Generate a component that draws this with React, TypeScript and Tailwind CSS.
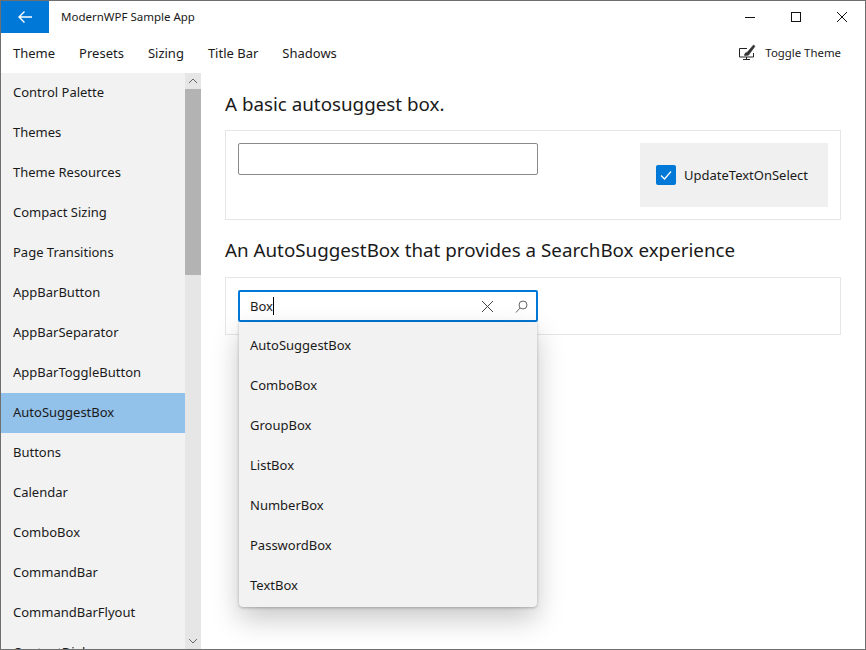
const nav = ["Control Palette","Themes","Theme Resources","Compact Sizing","Page Transitions","AppBarButton","AppBarSeparator","AppBarToggleButton","AutoSuggestBox","Buttons","Calendar","ComboBox","CommandBar","CommandBarFlyout","ContentDialog"];
const menu = ["Theme","Presets","Sizing","Title Bar","Shadows"];
const suggestions = ["AutoSuggestBox","ComboBox","GroupBox","ListBox","NumberBox","PasswordBox","TextBox"];

export default function App() {
  return (
    <div className="w-[866px] h-[650px] border border-[#6f6f6f] bg-white text-[#1a1a1a] flex flex-col overflow-hidden font-['Noto_Sans','Open_Sans',sans-serif] text-[13px]">
      <div className="h-8 flex shrink-0 items-center">
        <div className="w-12 h-8 bg-[#0078d7] flex items-center justify-center">
          <svg width="14" height="12" viewBox="0 0 14 12" fill="none" stroke="white" strokeWidth="1.4"><path d="M1 6H14M6.500 .5L1 6l5.500 5.500" /></svg>
        </div>
        <div className="ml-3 text-[11.5px] leading-none">ModernWPF Sample App</div>
        <div className="ml-auto flex h-8">
          <div className="w-[46px] flex items-center justify-center">
            <svg width="12" height="12" viewBox="0 0 12 12" stroke="#111" strokeWidth="1"><path d="M1 6.500h10" /></svg>
          </div>
          <div className="w-[46px] flex items-center justify-center">
            <svg width="12" height="12" viewBox="0 0 12 12" fill="none" stroke="#111" strokeWidth="1"><rect x="1.500" y="1.500" width="9" height="9" /></svg>
          </div>
          <div className="w-[46px] flex items-center justify-center">
            <svg width="12" height="12" viewBox="0 0 12 12" fill="none" stroke="#111" strokeWidth="1"><path d="M1 1l10 10M11 1L1 11" /></svg>
          </div>
        </div>
      </div>
      <div className="h-10 flex shrink-0 items-center pl-3 pr-6">
        <div className="flex gap-6 pt-[2px]">
          {menu.map((m) => <div key={m}>{m}</div>)}
        </div>
        <div className="ml-auto flex items-center gap-[9px] text-[11.4px]">
          <svg width="18" height="17" viewBox="0 0 18 17" fill="none" stroke="#222" strokeWidth="1"><path d="M9 4.500H1.500v8.500h14V9M8.500 13v2.500M5 15.500h7" /><path d="M6.500 11.500c0-2 1-3 2.500-3L15.500 1l1.500 1.300-5.500 7.500c-.3 1.500-2 1.700-5 1.700z" fill="#333" stroke="#333" strokeWidth=".6" /></svg>
          <span>Toggle Theme</span>
        </div>
      </div>
      <div className="flex-1 flex min-h-0">
        <div className="w-[200px] shrink-0 flex overflow-hidden bg-[#f2f2f2]">
          <div className="w-[184px] shrink-0">
            {nav.map((n) => (
              <div key={n} className={`h-10 pl-3 flex items-center ${n === "AutoSuggestBox" ? "bg-[#92c1e9]" : ""}`}>
                {n}
              </div>
            ))}
          </div>
          <div className="w-4 bg-[#e6e6e6] flex flex-col">
            <div className="h-4 flex items-center justify-center">
              <svg width="10" height="6" viewBox="0 0 10 6" fill="none" stroke="#666" strokeWidth="1"><path d="M1 5l4-4 4 4" /></svg>
            </div>
            <div className="h-[186px] bg-[#b3b3b3]" />
            <div className="flex-1 flex items-end justify-center pb-[5px]">
              <svg width="10" height="6" viewBox="0 0 10 6" fill="none" stroke="#666" strokeWidth="1"><path d="M1 1l4 4 4-4" /></svg>
            </div>
          </div>
        </div>
        <div className="flex-1 pl-6 pr-6 relative">
          <h2 className="text-[18.8px] leading-7 mt-[17px]">A basic autosuggest box.</h2>
          <div className="mt-[12px] h-[90px] border border-[#e6e6e6] p-3 flex justify-between">
            <div className="w-[300px] h-8 border border-[#8a8a8a] rounded-[2px]" />
            <div className="w-[188px] h-16 bg-[#f0f0f0] flex items-center pl-4 gap-2">
              <div className="w-5 h-5 rounded-[2px] bg-[#0078d7] flex items-center justify-center">
                <svg width="12" height="12" viewBox="0 0 12 12" fill="none" stroke="white" strokeWidth="1.2"><path d="M1 6.500l3.500 3.500L11 2.500" /></svg>
              </div>
              <span className="-mb-[2px]">UpdateTextOnSelect</span>
            </div>
          </div>
          <h2 className="text-[18.8px] leading-7 mt-4">An AutoSuggestBox that provides a SearchBox experience</h2>
          <div className="mt-[13px] h-[58px] border border-[#e6e6e6] pt-3 pl-3">
            <div className="w-[300px] h-8 border-2 border-[#0078d7] rounded-[2px] flex items-center pl-[10px] pr-[8px]">
              <span className="pt-[2px]">Box</span>
              <span className="w-px h-[18px] bg-black" />
              <svg className="ml-auto mr-[1px]" width="13" height="13" viewBox="0 0 13 13" fill="none" stroke="#444" strokeWidth="1"><path d="M1 1l11 11M12 1L1 12" /></svg>
              <svg className="ml-[20px]" width="13" height="13" viewBox="0 0 13 13" fill="none" stroke="#666" strokeWidth="1"><circle cx="8" cy="5" r="4" /><path d="M5 8l-4 4.500" /></svg>
            </div>
          </div>
          <div className="absolute left-[38px] top-[249px] w-[298px] h-[285px] bg-[#f2f2f2] rounded-b-[4px] pt-[4px] shadow-[0_1px_3px_rgba(0,0,0,0.25),0_12px_28px_rgba(0,0,0,0.22)] z-10">
            {suggestions.map((s) => (
              <div key={s} className="h-10 pl-[11px] flex items-center">{s}</div>
            ))}
          </div>
        </div>
      </div>
    </div>
  );
}
